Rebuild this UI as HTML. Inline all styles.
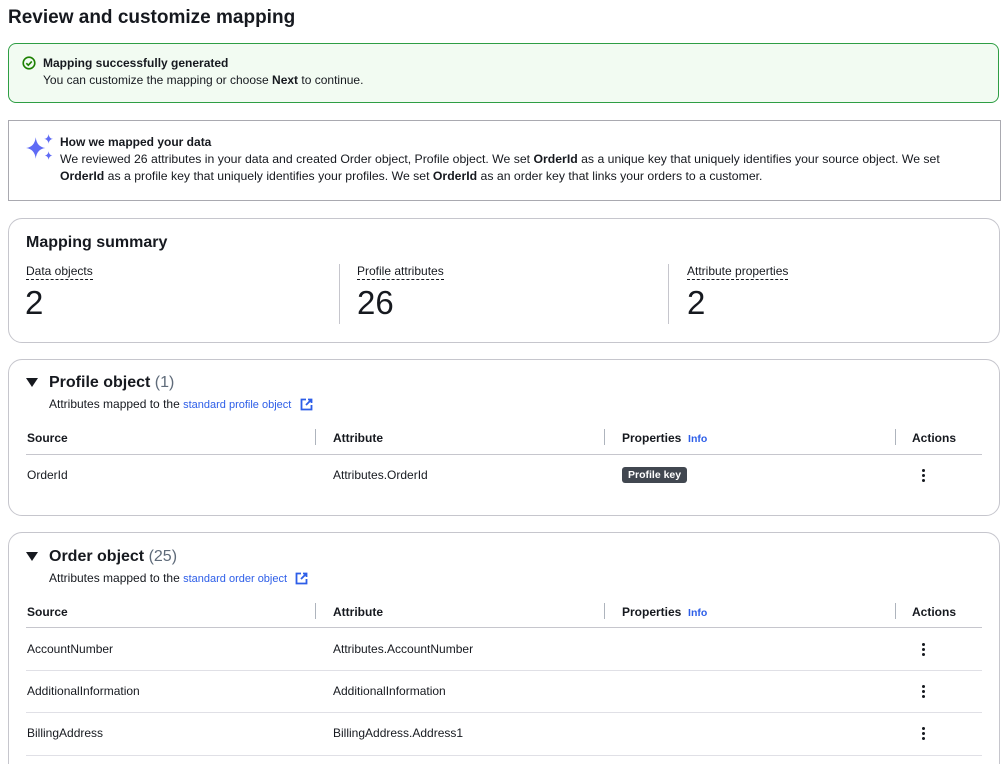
<!DOCTYPE html>
<html><head><meta charset="utf-8"><style>
*{margin:0;padding:0;box-sizing:border-box}
html,body{width:1007px;height:764px;overflow:hidden}
body{background:#fff;font-family:"Liberation Sans",sans-serif;color:#16191f;font-size:12px;position:relative}
.a{position:absolute;white-space:nowrap}
b{font-weight:bold}
.card{position:absolute;left:8px;width:992px;border:1px solid #c6c6cd;border-radius:14px;background:#fff}
.hline{position:absolute;left:26px;width:956px;height:1px;background:#e0e0e6}
.vs{position:absolute;width:1px;height:16px;background:#aeb4bd}
.th{font-weight:bold;font-size:12px}
.link{color:#2d5ee8}
.dots{position:absolute;width:3px}
.dots i{display:block;width:3px;height:3px;border-radius:50%;background:#16191f;margin-bottom:2px}
.lbl{border-bottom:1px dashed #16191f;padding-bottom:1px}
</style></head><body>
<div class="a" style="left:8px;top:7px;font-size:19px;font-weight:bold">Review and customize mapping</div>

<div style="position:absolute;left:8px;top:43px;width:991px;height:60px;background:#f2fbf2;border:1px solid #2e9e44;border-radius:8px"></div>
<svg class="a" style="left:22px;top:56px" width="14" height="14" viewBox="0 0 14 14"><circle cx="7" cy="7" r="5.8" fill="none" stroke="#1d8102" stroke-width="1.6"/><path d="M4.3 7.2l2 2 3.5-3.8" fill="none" stroke="#1d8102" stroke-width="1.6"/></svg>
<div class="a" style="left:43px;top:56px;font-weight:bold">Mapping successfully generated</div>
<div class="a" style="left:43px;top:73px">You can customize the mapping or choose <b>Next</b> to continue.</div>

<div style="position:absolute;left:8px;top:120px;width:993px;height:81px;border:1px solid #a9a9b0"></div>
<svg class="a" style="left:25px;top:133px" width="30" height="30" viewBox="0 0 28 28"><path d="M10 4 Q11 13 19 14 Q11 15 10 24 Q9 15 1 14 Q9 13 10 4Z" fill="#5f6bf5"/><path d="M22 1 Q22.5 5 26 5.5 Q22.5 6 22 10 Q21.5 6 18 5.5 Q21.5 5 22 1Z" fill="#5f6bf5"/><path d="M22 17 Q22.4 20.5 25.5 21 Q22.4 21.5 22 25 Q21.6 21.5 18.5 21 Q21.6 20.5 22 17Z" fill="#5f6bf5"/></svg>
<div class="a" style="left:60px;top:135px;font-weight:bold">How we mapped your data</div>
<div class="a" style="left:60px;top:152px;font-size:12.25px">We reviewed 26 attributes in your data and created Order object, Profile object. We set <b>OrderId</b> as a unique key that uniquely identifies your source object. We set</div>
<div class="a" style="left:60px;top:169px;font-size:12.25px"><b>OrderId</b> as a profile key that uniquely identifies your profiles. We set <b>OrderId</b> as an order key that links your orders to a customer.</div>

<div class="card" style="top:218px;height:125px"></div>
<div class="a" style="left:26px;top:234px;font-size:16px;font-weight:bold">Mapping summary</div>
<div class="a" style="left:26px;top:264px"><span class="lbl">Data objects</span></div>
<div class="a" style="left:357px;top:264px"><span class="lbl">Profile attributes</span></div>
<div class="a" style="left:687px;top:264px"><span class="lbl">Attribute properties</span></div>
<div class="a" style="left:25px;top:284px;font-size:33px">2</div>
<div class="a" style="left:357px;top:284px;font-size:33px">26</div>
<div class="a" style="left:687px;top:284px;font-size:33px">2</div>
<div style="position:absolute;left:339px;top:264px;width:1px;height:60px;background:#c6c6cd"></div>
<div style="position:absolute;left:668px;top:264px;width:1px;height:60px;background:#c6c6cd"></div>

<div class="card" style="top:359px;height:157px"></div>
<svg class="a" style="left:26px;top:378px" width="12" height="10"><path d="M0 0h12L6 9z" fill="#16191f"/></svg>
<div class="a" style="left:49px;top:374px;font-size:16px;font-weight:bold">Profile object <span style="font-weight:normal;color:#5f6b7a">(1)</span></div>
<div class="a" style="left:49px;top:397px">Attributes mapped to the <span class="link" style="font-size:11px">standard profile object</span></div>
<svg class="a" style="left:300px;top:398px" width="13" height="13" viewBox="0 0 13 13"><path d="M6 1.5H1.5v10h10V7M8 1.5h3.5V5M11.5 1.5L6 7" fill="none" stroke="#2d5ee8" stroke-width="1.8"/></svg>
<div class="a th" style="left:27px;top:431px">Source</div>
<div class="a th" style="left:333px;top:431px">Attribute</div>
<div class="a th" style="left:622px;top:431px">Properties&nbsp; <span class="link" style="font-size:10.5px">Info</span></div>
<div class="a th" style="left:912px;top:431px">Actions</div>
<div class="vs" style="left:315px;top:429px"></div><div class="vs" style="left:604px;top:429px"></div><div class="vs" style="left:895px;top:429px"></div>
<div class="hline" style="top:454px;background:#c6c6cd"></div>
<div class="a" style="left:27px;top:468px">OrderId</div>
<div class="a" style="left:333px;top:468px">Attributes.OrderId</div>
<div class="a" style="left:622px;top:467px;background:#414750;color:#fff;font-size:10.5px;padding:2px 6px;border-radius:3px;font-weight:bold">Profile key</div>
<div class="dots" style="left:922px;top:469px"><i></i><i></i><i></i></div>

<div class="card" style="top:532px;height:260px"></div>
<svg class="a" style="left:26px;top:552px" width="12" height="10"><path d="M0 0h12L6 9z" fill="#16191f"/></svg>
<div class="a" style="left:49px;top:548px;font-size:16px;font-weight:bold">Order object <span style="font-weight:normal;color:#5f6b7a">(25)</span></div>
<div class="a" style="left:49px;top:571px">Attributes mapped to the <span class="link" style="font-size:11px">standard order object</span></div>
<svg class="a" style="left:295px;top:572px" width="13" height="13" viewBox="0 0 13 13"><path d="M6 1.5H1.5v10h10V7M8 1.5h3.5V5M11.5 1.5L6 7" fill="none" stroke="#2d5ee8" stroke-width="1.8"/></svg>
<div class="a th" style="left:27px;top:605px">Source</div>
<div class="a th" style="left:333px;top:605px">Attribute</div>
<div class="a th" style="left:622px;top:605px">Properties&nbsp; <span class="link" style="font-size:10.5px">Info</span></div>
<div class="a th" style="left:912px;top:605px">Actions</div>
<div class="vs" style="left:315px;top:603px"></div><div class="vs" style="left:604px;top:603px"></div><div class="vs" style="left:895px;top:603px"></div>
<div class="hline" style="top:627px;background:#c6c6cd"></div>
<div class="a" style="left:27px;top:642px">AccountNumber</div>
<div class="a" style="left:333px;top:642px">Attributes.AccountNumber</div>
<div class="dots" style="left:922px;top:643px"><i></i><i></i><i></i></div>
<div class="hline" style="top:670px"></div>
<div class="a" style="left:27px;top:684px">AdditionalInformation</div>
<div class="a" style="left:333px;top:684px">AdditionalInformation</div>
<div class="dots" style="left:922px;top:685px"><i></i><i></i><i></i></div>
<div class="hline" style="top:712px"></div>
<div class="a" style="left:27px;top:726px">BillingAddress</div>
<div class="a" style="left:333px;top:726px">BillingAddress.Address1</div>
<div class="dots" style="left:922px;top:727px"><i></i><i></i><i></i></div>
<div class="hline" style="top:755px"></div>
</body></html>
